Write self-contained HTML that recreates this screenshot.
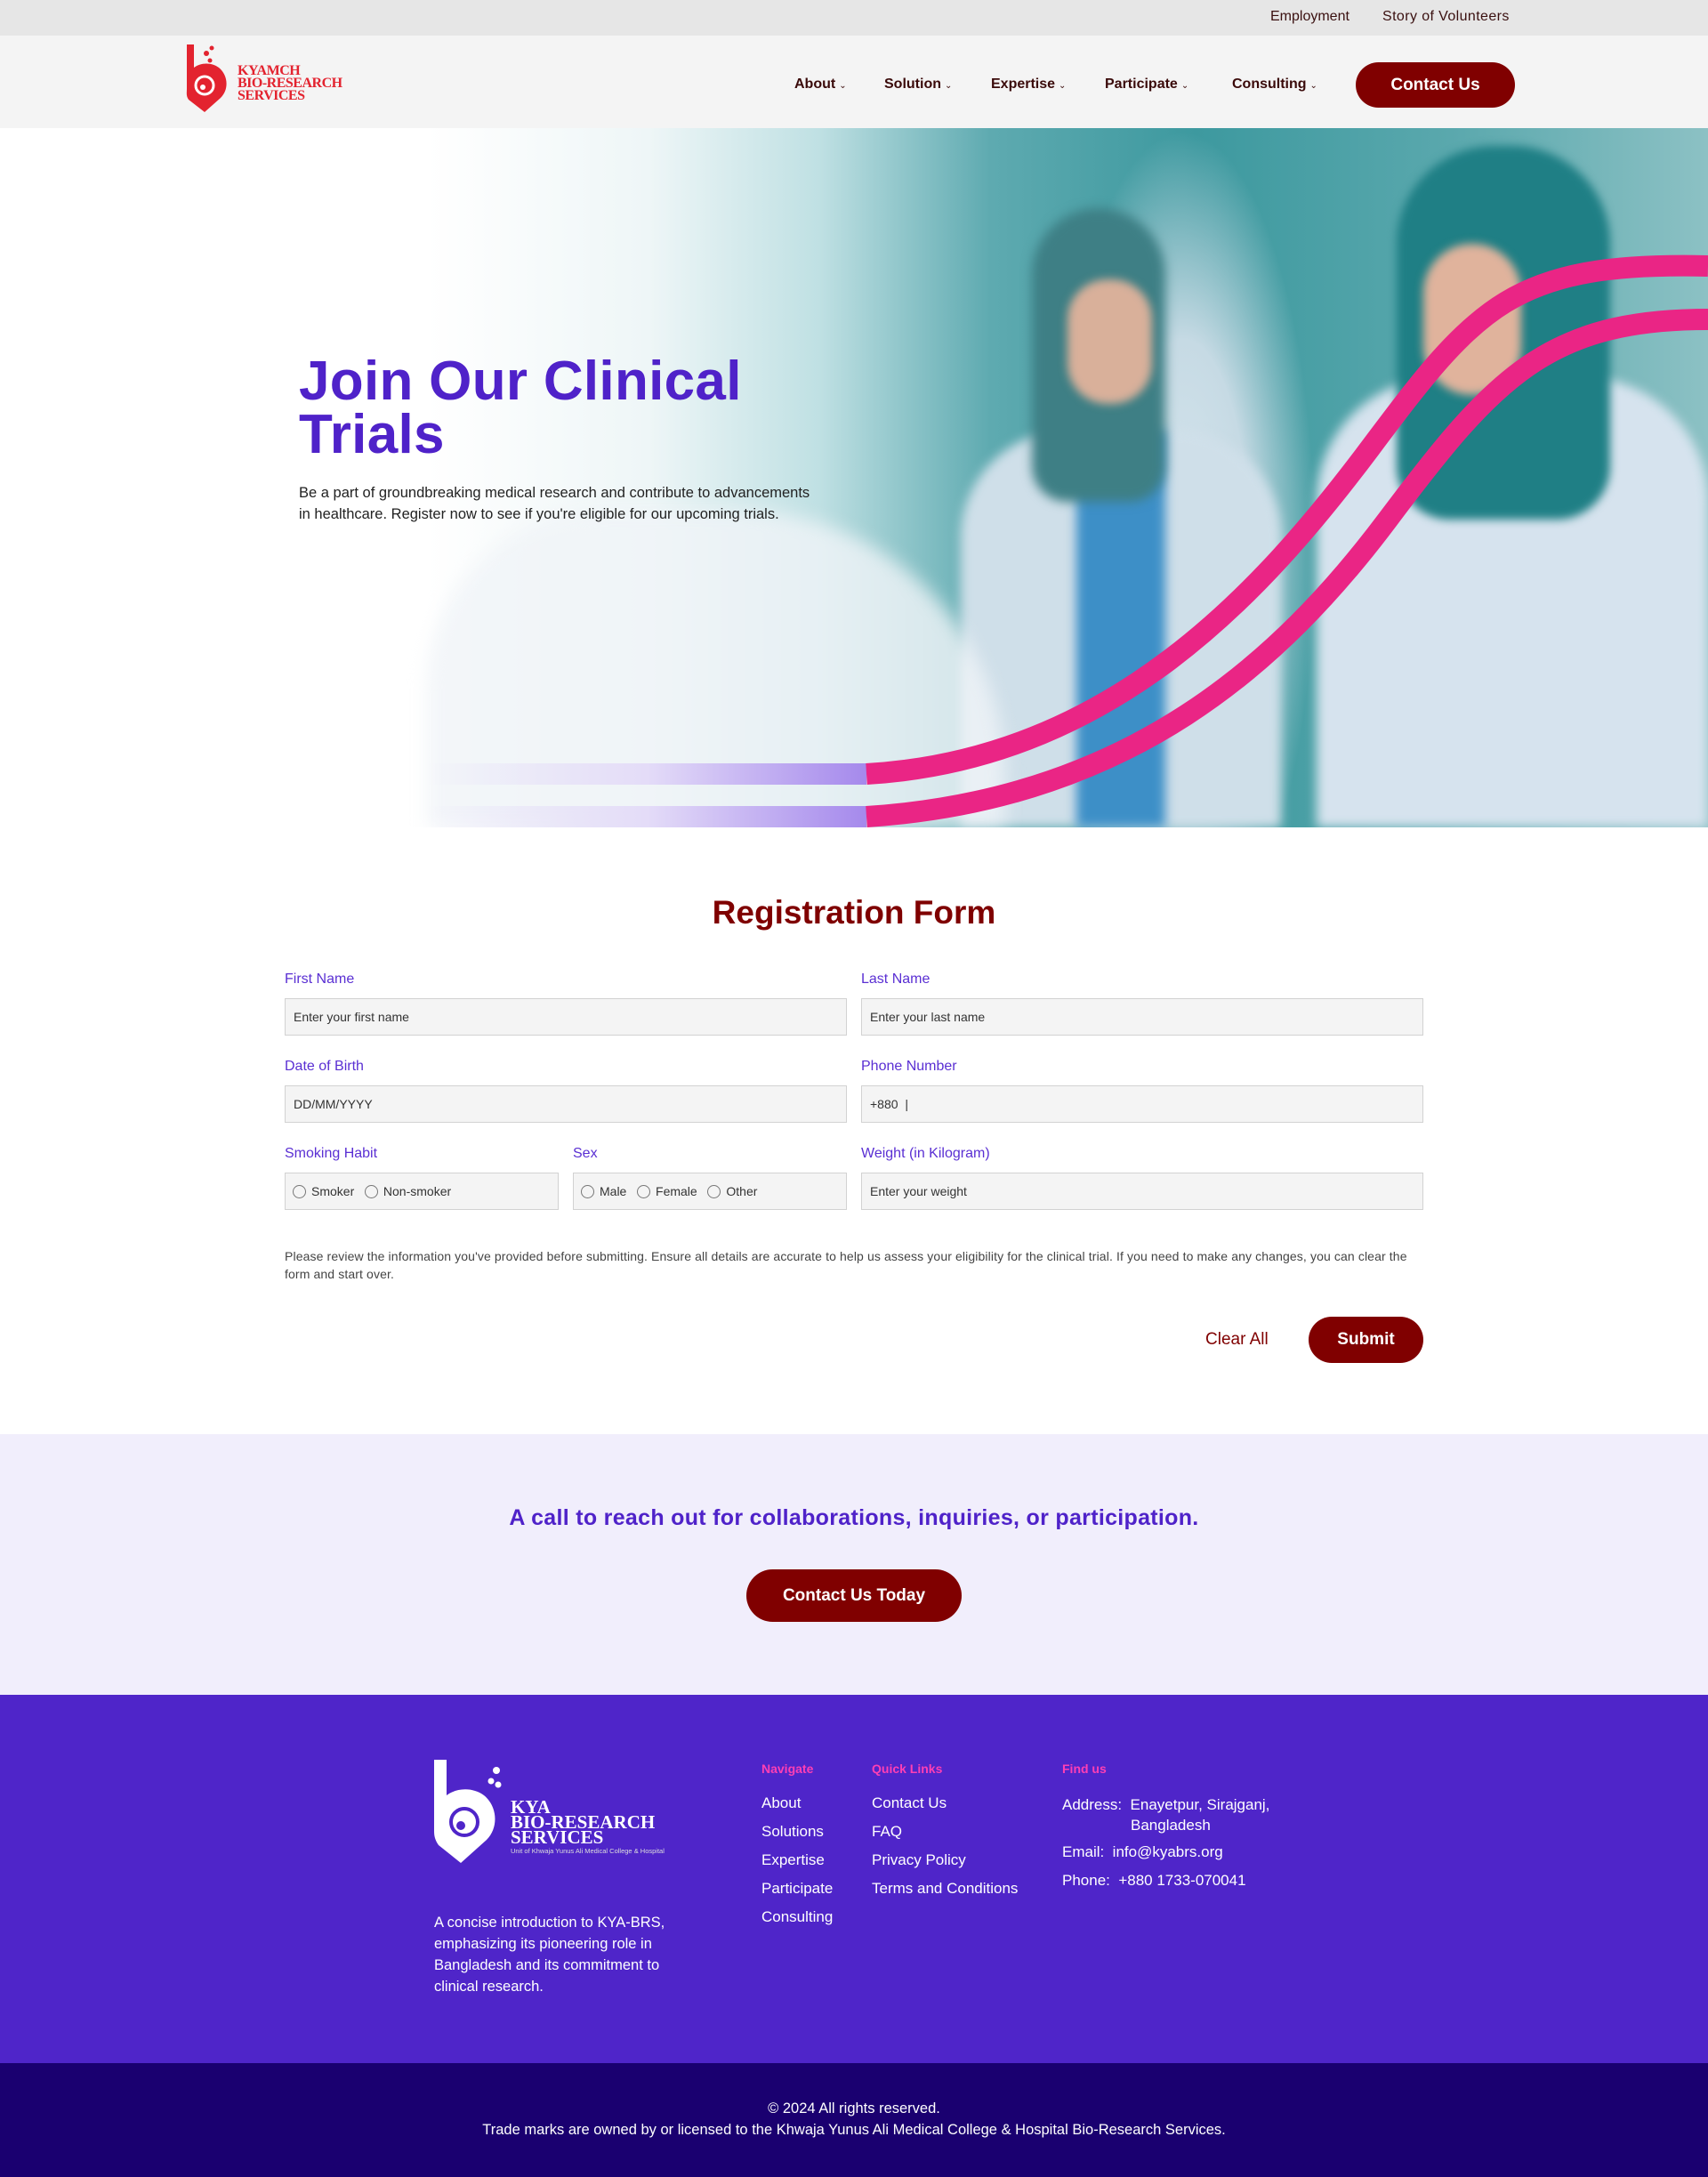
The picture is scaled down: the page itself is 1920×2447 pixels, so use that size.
<!DOCTYPE html>
<html><head><meta charset="utf-8"><style>
*{margin:0;padding:0;box-sizing:border-box}
body{width:1920px;height:2447px;font-family:"Liberation Sans",sans-serif;background:#fff;position:relative;overflow:hidden}
.abs{position:absolute}
.top{left:0;top:0;width:1920px;height:40px;background:#e6e6e6}
.top span{position:absolute;top:10px;font-size:16px;color:#3a1010}
.nav{left:0;top:40px;width:1920px;height:104px;background:#f4f4f4}
.nav .it{position:absolute;top:46px;font-size:16px;font-weight:bold;color:#3a0a0a}
.nav .it small{font-size:10px;font-weight:normal;margin-left:4px}
.btn{background:#800000;color:#fff;border-radius:30px;text-align:center;font-weight:bold}
.hero{left:0;top:144px;width:1920px;height:786px;overflow:hidden;background:linear-gradient(90deg,#fff 0%,#fff 25%,#eef6f7 38%,#bfe0e3 48%,#5eaab0 58%,#3d999f 70%,#5aa8ad 85%,#8cc1c4 100%)}
.lbl{position:absolute;font-size:16px;color:#5a2fd3}
.inp{position:absolute;height:42px;background:#f4f4f4;border:1px solid #d2d2d2;font-size:14px;color:#333;padding:12px 9px;white-space:nowrap}
.rad{display:inline-block;width:15px;height:15px;border:1px solid #777;border-radius:50%;vertical-align:-3px;margin-right:6px}
.f a{display:block;color:#fff;font-size:17px;height:32px}
</style></head><body>
<div class="abs top"><span style="left:1428px">Employment</span><span style="left:1554px;letter-spacing:0.4px">Story of Volunteers</span></div>
<div class="abs nav">
<svg class="abs" style="left:208px;top:8px" width="60" height="80" viewBox="0 0 60 80"><path d="M2 2h8v26c8-6 20-6 28 0 10 8 12 24 2 34L22 78 4 64C1 60 2 56 2 52z" fill="#e3232f"/><circle cx="22" cy="48" r="10" fill="none" stroke="#fff" stroke-width="3"/><circle cx="20" cy="50" r="3" fill="#fff"/><circle cx="24" cy="12" r="3" fill="#e3232f"/><circle cx="30" cy="6" r="2.5" fill="#e3232f"/><circle cx="28" cy="20" r="2.5" fill="#e3232f"/></svg>
<div class="abs" style="left:267px;top:33px;font-family:'Liberation Serif',serif;font-weight:bold;color:#e3232f;font-size:16px;line-height:14px;letter-spacing:-0.5px">KYAMCH<br>BIO-RESEARCH<br>SERVICES</div>
<div class="it" style="left:893px">About<small>⌄</small></div>
<div class="it" style="left:994px">Solution<small>⌄</small></div>
<div class="it" style="left:1114px">Expertise<small>⌄</small></div>
<div class="it" style="left:1242px">Participate<small>⌄</small></div>
<div class="it" style="left:1385px">Consulting<small>⌄</small></div>
<div class="abs btn" style="left:1524px;top:30px;width:179px;height:51px;line-height:51px;font-size:19px;font-weight:600">Contact Us</div>
</div>
<div class="abs hero">
<div class="abs" style="left:1180px;top:0;width:300px;height:786px;background:radial-gradient(ellipse at 50% 60%,#d7e6ee 0%,#c6dae4 35%,rgba(120,180,190,0) 70%)"></div>
<div class="abs" style="left:1080px;top:340px;width:360px;height:446px;border-radius:120px 120px 0 0;background:#cfdfe9;filter:blur(6px)"></div>
<div class="abs" style="left:1210px;top:340px;width:100px;height:446px;background:#3d8fc7;filter:blur(6px)"></div>
<div class="abs" style="left:1160px;top:90px;width:150px;height:330px;border-radius:75px 75px 40px 40px;background:#3e7f85;filter:blur(6px)"></div>
<div class="abs" style="left:1200px;top:170px;width:95px;height:140px;border-radius:45px;background:#d9b09a;filter:blur(5px)"></div>
<div class="abs" style="left:1480px;top:280px;width:440px;height:506px;border-radius:140px 140px 0 0;background:#d6e3ee;filter:blur(6px)"></div>
<div class="abs" style="left:1570px;top:20px;width:240px;height:420px;border-radius:110px 110px 60px 60px;background:#1f7f85;filter:blur(5px)"></div>
<div class="abs" style="left:1600px;top:130px;width:110px;height:170px;border-radius:55px;background:#e0b39c;filter:blur(5px)"></div>
<div class="abs" style="left:480px;top:430px;width:650px;height:356px;border-radius:200px 300px 0 0;background:rgba(240,244,248,.8);filter:blur(10px)"></div>
<div class="abs" style="left:480px;top:714px;width:494px;height:24px;background:linear-gradient(90deg,rgba(230,220,250,0),#e4dcf8 50%,#a589ec)"></div>
<div class="abs" style="left:480px;top:762px;width:494px;height:24px;background:linear-gradient(90deg,rgba(230,220,250,0),#e4dcf8 50%,#a589ec)"></div>
<svg class="abs" style="left:0;top:0" width="1920" height="786"><path d="M974 726 C1250 710 1420 520 1540 360 S1700 150 1920 155" fill="none" stroke="#ea2585" stroke-width="24"/><path d="M974 774 C1270 755 1440 600 1560 440 S1740 215 1920 215" fill="none" stroke="#ea2585" stroke-width="24"/></svg>
<div class="abs" style="left:336px;top:255px;font-size:62px;font-weight:bold;color:#4f22c9;line-height:60px;letter-spacing:0.3px">Join Our Clinical<br>Trials</div>
<div class="abs" style="left:336px;top:398px;width:580px;font-size:16.5px;line-height:24px;color:#222">Be a part of groundbreaking medical research and contribute to advancements in healthcare. Register now to see if you're eligible for our upcoming trials.</div>
</div>
<div class="abs" style="left:0;top:1005px;width:1920px;text-align:center;font-size:37px;font-weight:bold;color:#7f0000">Registration Form</div>
<div class="lbl" style="left:320px;top:1092px">First Name</div><div class="lbl" style="left:968px;top:1092px">Last Name</div>
<div class="inp" style="left:320px;top:1122px;width:632px">Enter your first name</div><div class="inp" style="left:968px;top:1122px;width:632px">Enter your last name</div>
<div class="lbl" style="left:320px;top:1190px">Date of Birth</div><div class="lbl" style="left:968px;top:1190px">Phone Number</div>
<div class="inp" style="left:320px;top:1220px;width:632px">DD/MM/YYYY</div><div class="inp" style="left:968px;top:1220px;width:632px">+880 &nbsp;|</div>
<div class="lbl" style="left:320px;top:1288px">Smoking Habit</div><div class="lbl" style="left:644px;top:1288px">Sex</div><div class="lbl" style="left:968px;top:1288px">Weight (in Kilogram)</div>
<div class="inp" style="left:320px;top:1318px;width:308px;padding-left:8px"><span class="rad"></span>Smoker &nbsp; <span class="rad"></span>Non-smoker</div>
<div class="inp" style="left:644px;top:1318px;width:308px;padding-left:8px"><span class="rad"></span>Male &nbsp; <span class="rad"></span>Female &nbsp; <span class="rad"></span>Other</div>
<div class="inp" style="left:968px;top:1318px;width:632px">Enter your weight</div>
<div class="abs" style="left:320px;top:1402px;width:1290px;font-size:14px;line-height:20px;color:#444;letter-spacing:0.12px">Please review the information you've provided before submitting. Ensure all details are accurate to help us assess your eligibility for the clinical trial. If you need to make any changes, you can clear the form and start over.</div>
<div class="abs" style="left:1355px;top:1495px;font-size:19px;color:#800000">Clear All</div>
<div class="abs btn" style="left:1471px;top:1480px;width:129px;height:52px;line-height:52px;font-size:19px">Submit</div>
<div class="abs" style="left:0;top:1612px;width:1920px;height:293px;background:#f1eefc"></div>
<div class="abs" style="left:0;top:1692px;width:1920px;text-align:center;font-size:25px;font-weight:bold;color:#4f22c9;letter-spacing:0.3px">A call to reach out for collaborations, inquiries, or participation.</div>
<div class="abs btn" style="left:839px;top:1764px;width:242px;height:59px;line-height:59px;font-size:19px;font-weight:600">Contact Us Today</div>
<div class="abs f" style="left:0;top:1905px;width:1920px;height:414px;background:#4f25c9">
<svg class="abs" style="left:488px;top:73px" width="80" height="118" viewBox="0 0 80 118"><path d="M0 0h14v40c12-9 30-9 42 0 15 12 17 36 3 50L30 116 5 96C1 90 0 86 0 80z" fill="#fff"/><circle cx="34" cy="70" r="15" fill="none" stroke="#4f25c9" stroke-width="4"/><circle cx="30" cy="74" r="5" fill="#4f25c9"/><circle cx="70" cy="12" r="4" fill="#fff"/><circle cx="64" cy="24" r="3.5" fill="#fff"/><circle cx="72" cy="28" r="3.5" fill="#fff"/></svg>
<div class="abs" style="left:574px;top:118px;font-family:'Liberation Serif',serif;font-weight:bold;color:#fff;font-size:21px;line-height:17px">KYA<br>BIO-RESEARCH<br>SERVICES</div>
<div class="abs" style="left:574px;top:171px;color:#ddd;font-size:7.5px">Unit of Khwaja Yunus Ali Medical College &amp; Hospital</div>
<div class="abs" style="left:488px;top:244px;width:300px;color:#fff;font-size:16.5px;line-height:24px">A concise introduction to KYA-BRS, emphasizing its pioneering role in Bangladesh and its commitment to clinical research.</div>
<div class="abs" style="left:856px;top:75px"><div style="color:#ff3fb4;font-weight:bold;font-size:14px;height:37px">Navigate</div><a>About</a><a>Solutions</a><a>Expertise</a><a>Participate</a><a>Consulting</a></div>
<div class="abs" style="left:980px;top:75px"><div style="color:#ff3fb4;font-weight:bold;font-size:14px;height:37px">Quick Links</div><a>Contact Us</a><a>FAQ</a><a>Privacy Policy</a><a>Terms and Conditions</a></div>
<div class="abs" style="left:1194px;top:75px;color:#fff;font-size:17px"><div style="color:#ff3fb4;font-weight:bold;font-size:14px;height:37px">Find us</div><div style="line-height:23px">Address:&nbsp; Enayetpur, Sirajganj,<br><span style="padding-left:77px">Bangladesh</span></div><div style="margin-top:9px">Email:&nbsp; info@kyabrs.org</div><div style="margin-top:12px">Phone:&nbsp; +880 1733-070041</div></div>
</div>
<div class="abs" style="left:0;top:2319px;width:1920px;height:128px;background:#1a0070;color:#fff;text-align:center;font-size:16.5px;line-height:24px;padding-top:39px">© 2024 All rights reserved.<br>Trade marks are owned by or licensed to the Khwaja Yunus Ali Medical College &amp; Hospital Bio-Research Services.</div>
</body></html>
